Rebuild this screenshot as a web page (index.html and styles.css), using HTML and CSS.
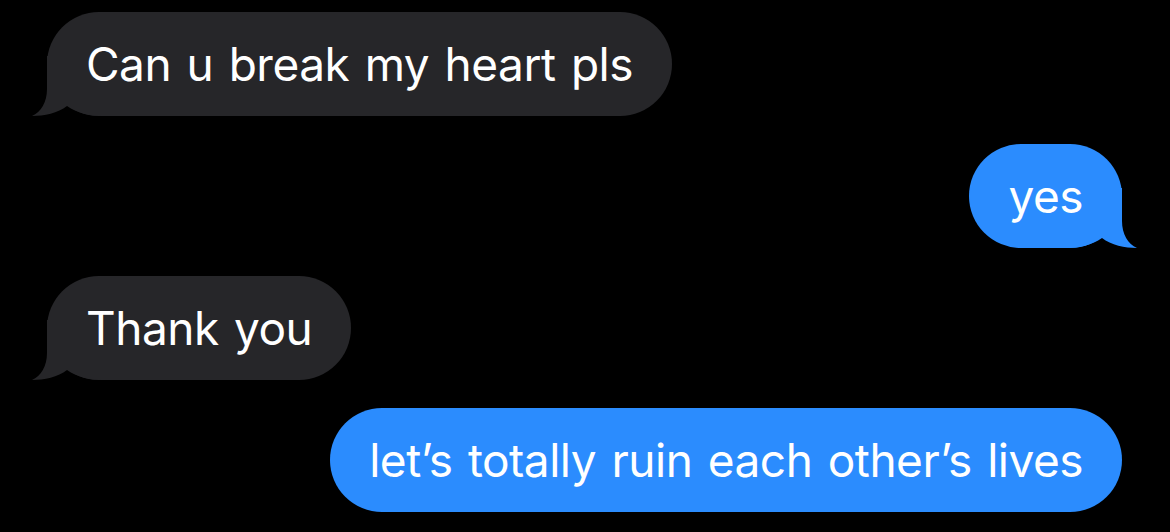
FILE: index.html
```html
<!DOCTYPE html>
<html lang="en">
<head>
  <meta charset="UTF-8" />
  <meta name="viewport" content="width=device-width, initial-scale=1.0" />
  <title>Messages</title>
  <link rel="stylesheet" href="styles.css">
</head>
<body>

<!-- Conversation -->
<div class="thread">
  <div class="bubble them tail">
    <span>Can u break my heart pls</span>
    <svg class="tail-shape" viewBox="0 0 70 60" width="70" height="60"><path d="M15 0 L15 33 C15 46 9 56 0 60 C12 60 26 57 35 50 C45 57 58 60 70 60 L70 0 Z"/></svg>
  </div>

  <div class="bubble me tail">
    <span>yes</span>
    <svg class="tail-shape" viewBox="0 0 70 60" width="70" height="60"><path d="M15 0 L15 33 C15 46 9 56 0 60 C12 60 26 57 35 50 C45 57 58 60 70 60 L70 0 Z"/></svg>
  </div>

  <div class="bubble them tail">
    <span>Thank you</span>
    <svg class="tail-shape" viewBox="0 0 70 60" width="70" height="60"><path d="M15 0 L15 33 C15 46 9 56 0 60 C12 60 26 57 35 50 C45 57 58 60 70 60 L70 0 Z"/></svg>
  </div>

  <div class="bubble me">
    <span>let’s totally ruin each other’s lives</span>
  </div>
</div>

</body>
</html>
```

FILE: styles.css
```css
body {
  margin: 0;
  background: #000;
  font-family: Inter, "Noto Sans", sans-serif;
}

.thread {
  display: flex;
  flex-direction: column;
  gap: 28px;
  padding: 12px 48px 0 47px;
}

.bubble {
  position: relative;
  display: flex;
  align-items: center;
  height: 104px;
  padding: 0 39px;
  border-radius: 52px;
  font-size: 46px;
  color: #fff;
  letter-spacing: -0.5px;
  word-spacing: 3px;
}

.bubble span {
  position: relative;
  z-index: 1;
}

.them {
  align-self: flex-start;
  background: #262629;
}

.me {
  align-self: flex-end;
  background: #2b8cfe;
}

.tail-shape {
  position: absolute;
  bottom: 0;
  left: -15px;
  fill: #262629;
}

.me .tail-shape {
  left: auto;
  right: -15px;
  transform: scaleX(-1);
  fill: #2b8cfe;
}
```
